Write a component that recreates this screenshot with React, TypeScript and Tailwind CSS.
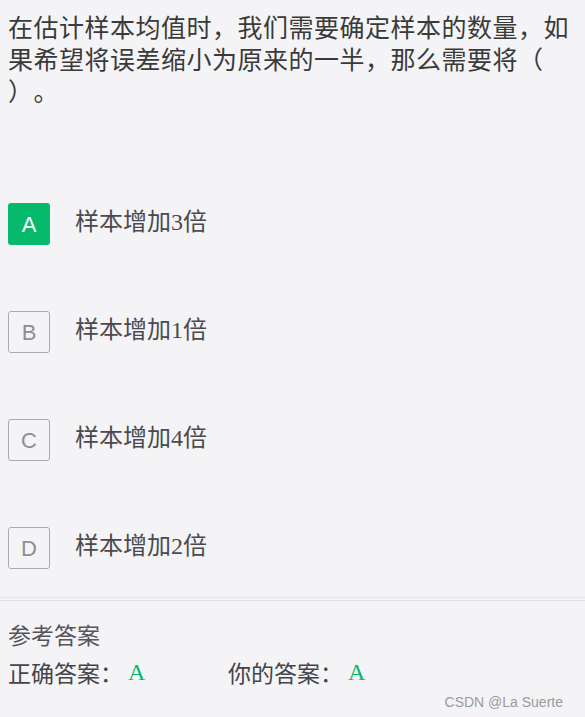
const options = [
  { key: "A", pre: "样本增加", num: "3", post: "倍", selected: true },
  { key: "B", pre: "样本增加", num: "1", post: "倍", selected: false },
  { key: "C", pre: "样本增加", num: "4", post: "倍", selected: false },
  { key: "D", pre: "样本增加", num: "2", post: "倍", selected: false },
];

const cjk = "font-['Noto_Sans_CJK_SC','Noto_Sans',sans-serif]";

export default function App() {
  return (
    <div className={`w-[585px] h-[717px] overflow-hidden bg-[#f4f4f6] text-[#444] ${cjk}`}>
      {/* question */}
      <div className="px-2 pt-[10px] text-[25px] leading-[32px] tracking-[0.5px] text-[#3a3a3a] [text-spacing-trim:space-all]">
        <div className="whitespace-nowrap">在估计样本均值时，我们需要确定样本的数量，如</div>
        <div className="whitespace-nowrap">果希望将误差缩小为原来的一半，那么需要将（</div>
        <div className="whitespace-nowrap">）。</div>
      </div>

      {/* options */}
      <div className="mt-[97px] flex flex-col gap-[66px] px-2">
        {options.map((o) => (
          <div key={o.key} className="flex items-center h-[42px]">
            <div
              className={
                o.selected
                  ? "w-[42px] h-[42px] rounded-[3px] bg-[#07b96c] text-white flex items-center justify-center text-[22px] font-['Liberation_Sans',sans-serif]"
                  : "w-[42px] h-[42px] rounded-[3px] border border-[#a9abb3] text-[#8d8f97] flex items-center justify-center text-[22px] font-['Liberation_Sans',sans-serif]"
              }
            >
              {o.key}
            </div>
            <div className="ml-[25px] pb-[6px] text-[24px] text-[#4a4a4f]">
              {o.pre}
              <span className="font-['Liberation_Serif',serif]">{o.num}</span>
              {o.post}
            </div>
          </div>
        ))}
      </div>

      {/* answer section */}
      <div className="mt-[28px] border-t border-[#e6e6ea]">
        <div className="border-t border-[#e0e0e6] mt-[2px] px-2 pt-[17px]">
          <div className="text-[23px] leading-[32px] text-[#55555a]">参考答案</div>
          <div className="flex items-center mt-[6px] text-[23px] leading-[32px] text-[#44444a]">
            <div className="w-[220px] flex items-center">
              正确答案：
              <span className="ml-[5px] text-[24px] text-[#07b96c] font-['Liberation_Serif',serif]">A</span>
            </div>
            <div className="flex items-center">
              你的答案：
              <span className="ml-[5px] text-[24px] text-[#07b96c] font-['Liberation_Serif',serif]">A</span>
            </div>
          </div>
          <div className="flex justify-end pr-[14px] mt-[4px] text-[14px] text-[#9a9a9e] font-['Liberation_Sans',sans-serif]">
            CSDN @La Suerte
          </div>
        </div>
      </div>
    </div>
  );
}
